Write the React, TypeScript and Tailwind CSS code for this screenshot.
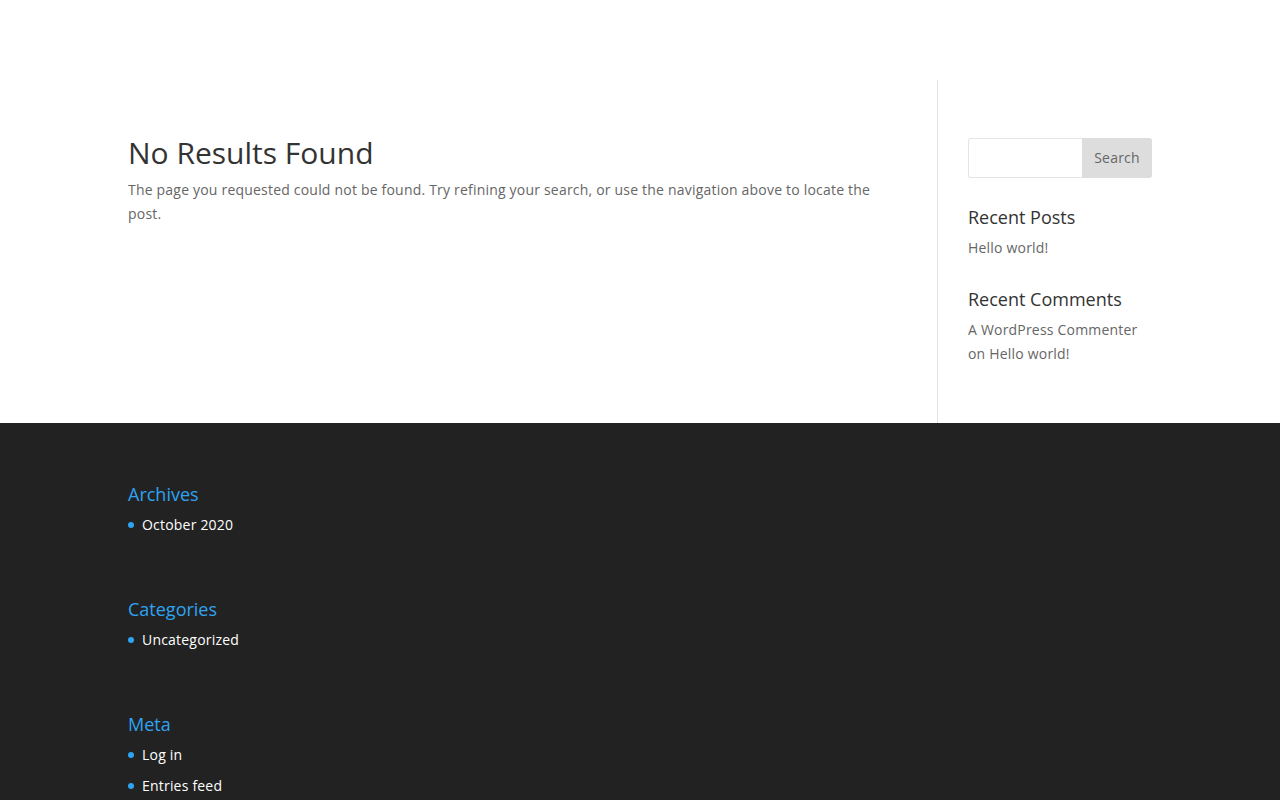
const footerWidgets = [
  { title: 'Archives', items: ['October 2020'] },
  { title: 'Categories', items: ['Uncategorized'] },
  { title: 'Meta', items: ['Log in', 'Entries feed'] },
];

const App = () => {
  return (
    <div className="min-h-screen bg-white text-[14px] leading-[24px] tracking-[0.2px] text-[#666]" style={{ fontFamily: '"Open Sans", "Liberation Sans", sans-serif' }}>
      <div className="h-[80px]" />

      <div className="mx-auto flex w-[1024px]">
        <div className="w-[809px] pt-[58px] pr-[60px]">
          <h1 className="pb-[10px] text-[30px] leading-[30px] font-medium tracking-normal text-[#333]">No Results Found</h1>
          <p>
            The page you requested could not be found. Try refining your search, or use the navigation above to locate the post.
          </p>
        </div>

        <aside className="w-[215px] border-l border-[#e2e2e2] pt-[58px] pb-[57px] pl-[30px]">
          <div className="mb-[30px] flex h-[40px]">
            <input className="h-full w-[114px] rounded-l-[3px] border border-r-0 border-[#e5e5e5] bg-white outline-none" />
            <button className="h-full w-[70px] rounded-r-[3px] bg-[#ddd] text-[14px] text-[#666]">Search</button>
          </div>

          <div className="mb-[30px]">
            <h4 className="pb-[10px] text-[18px] leading-[18px] font-medium tracking-normal text-[#333]">Recent Posts</h4>
            <p>Hello world!</p>
          </div>

          <div>
            <h4 className="pb-[10px] text-[18px] leading-[18px] font-medium tracking-normal text-[#333]">Recent Comments</h4>
            <p>A WordPress Commenter on Hello world!</p>
          </div>
        </aside>
      </div>

      <footer className="bg-[#222] pt-[62px] pb-[40px]">
        <div className="mx-auto flex w-[1024px] flex-col gap-[56px]">
          {footerWidgets.map((w) => (
            <div key={w.title}>
              <h4 className="pb-[10px] text-[18px] leading-[18px] font-medium tracking-normal text-[#2ea3f2]">{w.title}</h4>
              <ul>
                {w.items.map((item) => (
                  <li key={item} className="relative mb-[7px] pl-[14px] text-white">
                    <span className="absolute top-[9px] left-0 h-[6px] w-[6px] rounded-full bg-[#2ea3f2]" />
                    {item}
                  </li>
                ))}
              </ul>
            </div>
          ))}
        </div>
      </footer>
    </div>
  );
};

export default App;
